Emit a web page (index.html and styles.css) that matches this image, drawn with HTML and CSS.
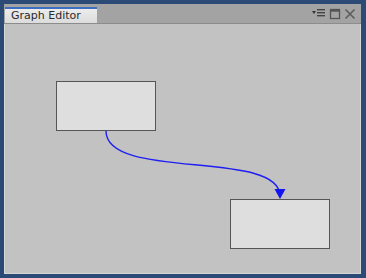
FILE: index.html
```html
<html>

<head>
    <meta charset='utf-8'>
    <title>Graph Editor</title>

    <link rel="stylesheet" href="styles.css">
</head>

<body>
    <div class="window">
        <div class="titlebar">
            <div class="tab">Graph Editor</div>
            <div class="tools">
                <svg class="icon-menu" width="14" height="10" viewBox="0 0 14 10">
                    <polygon points="0,3 4,3 2,6" fill="#333" />
                    <rect x="5" y="1" width="8" height="1.4" fill="#444" />
                    <rect x="5" y="4" width="8" height="1.4" fill="#444" />
                    <rect x="5" y="7" width="8" height="1.4" fill="#444" />
                </svg>
                <svg class="icon-max" width="12" height="12" viewBox="0 0 12 12">
                    <rect x="1.5" y="1.5" width="9" height="9" fill="none" stroke="#555" stroke-width="1.3" />
                    <rect x="1.5" y="1.5" width="9" height="2.2" fill="#555" />
                </svg>
                <svg class="icon-close" width="12" height="12" viewBox="0 0 12 12">
                    <path d="M1.5 1.5 L10.5 10.5 M10.5 1.5 L1.5 10.5" stroke="#5a5a5a" stroke-width="1.5" />
                </svg>
            </div>
        </div>

        <div class="canvas">
            <!-- connection between the two nodes -->
            <svg class="edges" width="355" height="249">
                <path d="M101 107 C101 157, 275 125, 275 172" fill="none" stroke="#1f1ff2" stroke-width="1.4" />
                <polygon points="269.5,165 280.5,165 275,175" fill="#1414f0" />
            </svg>
            <div class="node" style="left: 51px; top: 57px;"></div>
            <div class="node" style="left: 225px; top: 175px;"></div>
        </div>
    </div>
</body>

</html>
```

FILE: styles.css
```css
body {
    margin: 0;
    padding: 4px 5px 4px 4px;
    background: #2b4b76;
    height: 100%;
    box-sizing: border-box;
}
.window {
    display: flex;
    flex-direction: column;
    width: 357px;
    height: 270px;
    background: #a3a3a3;
}
.titlebar {
    display: flex;
    align-items: flex-end;
    height: 20px;
    border-bottom: 1px solid #8c8c8c;
    box-sizing: border-box;
}
.tab {
    margin-left: 1px;
    width: 92px;
    height: 16px;
    box-sizing: border-box;
    border-top: 2px solid #3c6fc2;
    background: linear-gradient(#ececec, #dcdcdc);
    font-family: "DejaVu Sans", sans-serif;
    font-size: 11px;
    line-height: 13px;
    color: #2a2a2a;
    padding-left: 6px;
}
.tools {
    margin-left: auto;
    display: flex;
    align-items: center;
    gap: 3px;
    height: 19px;
    padding-right: 5px;
}
.icon-menu {
    margin-top: -1px;
}
.canvas {
    position: relative;
    flex: 1;
    background: #c2c2c2;
    border: 1px solid #d6d6d6;
    border-top: none;
    overflow: hidden;
}
.edges {
    position: absolute;
    left: 0;
    top: 0;
    z-index: 1;
}
.node {
    position: absolute;
    width: 100px;
    height: 50px;
    box-sizing: border-box;
    background: #dedede;
    border: 1px solid #555;
}
```
